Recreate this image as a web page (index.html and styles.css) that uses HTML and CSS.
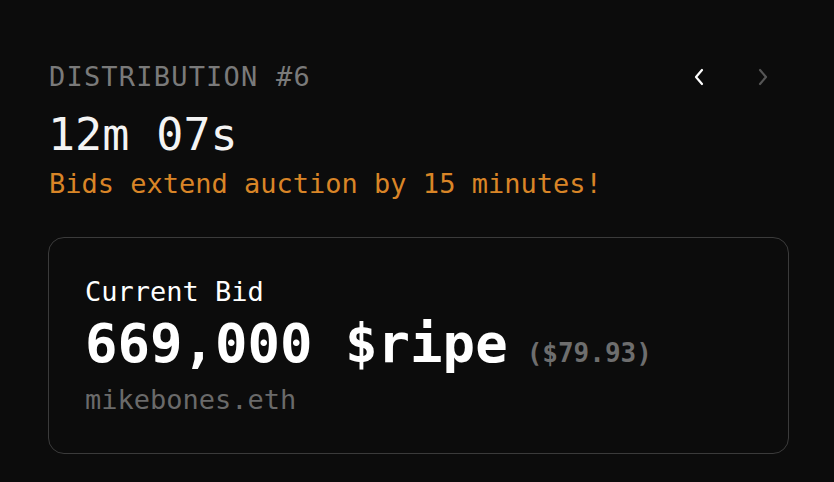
FILE: index.html
```html
<!DOCTYPE html>
<html>
<head>
<meta charset="utf-8">
<link rel="stylesheet" href="styles.css">
</head>
<body>
<main class="auction">
  <div class="head">
    <div class="title">DISTRIBUTION #6</div>
    <div class="nav">
      <button class="nav-btn active" aria-label="Previous">
        <svg width="24" height="24" viewBox="0 0 24 24"><path d="M15 5 L9 12 L15 19" fill="none" stroke="currentColor" stroke-width="2.2" stroke-linecap="round" stroke-linejoin="round"/></svg>
      </button>
      <button class="nav-btn" aria-label="Next">
        <svg width="24" height="24" viewBox="0 0 24 24"><path d="M9 5 L15 12 L9 19" fill="none" stroke="currentColor" stroke-width="2.2" stroke-linecap="round" stroke-linejoin="round"/></svg>
      </button>
    </div>
  </div>
  <div class="timer">12m 07s</div>
  <div class="note">Bids extend auction by 15 minutes!</div>
  <section class="card">
    <div class="label">Current Bid</div>
    <div class="bid">
      <span class="amount">669,000 $ripe</span>
      <span class="usd">($79.93)</span>
    </div>
    <div class="bidder">mikebones.eth</div>
  </section>
</main>
</body>
</html>
```
FILE: styles.css
```css
html, body {
  margin: 0;
  padding: 0;
  background: #0c0c0c;
}
body {
  font-family: "DejaVu Sans Mono", "Liberation Mono", monospace;
  color: #ffffff;
}
.auction {
  width: 741px;
  padding: 61px 0 0 48px;
}
.head {
  display: flex;
  justify-content: space-between;
  align-items: center;
  padding-left: 1px;
}
.title {
  font-size: 27px;
  line-height: 32px;
  letter-spacing: 1.2px;
  color: #7a7a7a;
}
.nav {
  display: flex;
  gap: 40px;
  margin-right: 14px;
}
.nav-btn {
  background: none;
  border: 0;
  padding: 0;
  width: 24px;
  height: 24px;
  color: #555555;
  display: block;
}
.nav-btn.active {
  color: #ffffff;
}
.nav-btn svg {
  display: block;
}
.timer {
  margin-top: 16px;
  font-size: 45px;
  line-height: 52px;
  color: #f4f4f4;
}
.note {
  margin-top: 7px;
  padding-left: 1px;
  font-size: 27px;
  line-height: 32px;
  color: #d98527;
}
.card {
  margin-top: 37px;
  border: 1px solid #3b3b3b;
  border-radius: 16px;
  padding: 38px 37px 37px 36px;
}
.label {
  font-size: 27px;
  line-height: 32px;
  color: #ffffff;
}
.bid {
  margin-top: 5px;
  display: flex;
  align-items: baseline;
  gap: 19px;
}
.amount {
  font-size: 54px;
  line-height: 62px;
  font-weight: bold;
  color: #ffffff;
}
.usd {
  font-size: 26px;
  font-weight: bold;
  color: #6e6e6e;
}
.bidder {
  margin-top: 9px;
  font-size: 27px;
  line-height: 32px;
  color: #6a6a6a;
}
```
